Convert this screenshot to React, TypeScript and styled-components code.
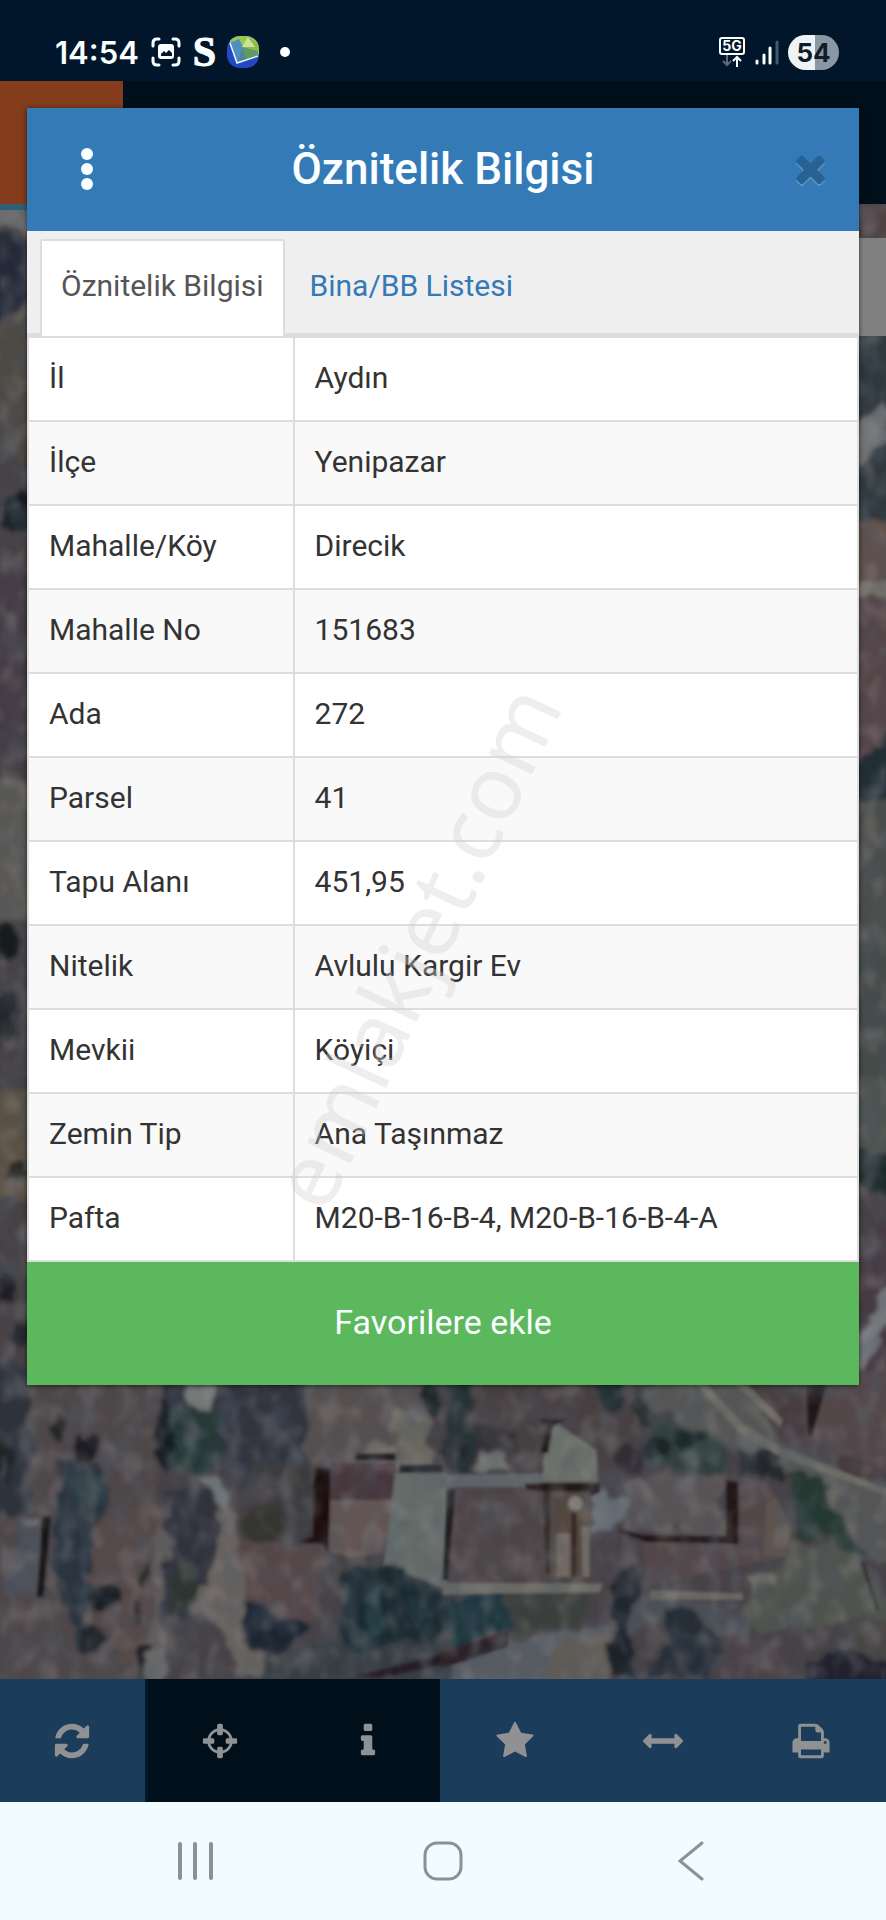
import React, { useState } from "react";
import styled, { createGlobalStyle } from "styled-components";

const GlobalStyle = createGlobalStyle`
    *{
        box-sizing : border-box;
    }
    body{
        margin : 0;
        background-color : #01162a;
        font-family : Roboto, "Liberation Sans", sans-serif;
        font-size : 30px;
        color : #333;
    }
    button{
        font : inherit;
        color : inherit;
        border : none;
        padding : 0;
        background : none;
        cursor : pointer;
    }
    svg{
        display : block;
    }
`

const PageStyled = styled.div`
    min-height : 100vh;
    display : flex;
    flex-direction : column;
    position : relative;
`

// status bar
const StatusBarStyled = styled.header`
    height : 81px;
    padding : 22px 47px 0 55px;
    display : flex;
    align-items : flex-start;
    justify-content : space-between;
    background-color : #01162a;
    color : #fbffff;
`

const StatusGroupStyled = styled.div<{gap:number}>`
    height : 60px;
    display : flex;
    align-items : center;
    gap : ${(props) => props.gap}px;
`

const ClockStyled = styled.time`
    font-family : Inter, sans-serif;
    font-weight : 600;
    font-size : 31px;
`

const SerifMarkStyled = styled.span`
    font-family : "Liberation Serif", serif;
    font-weight : 700;
    font-size : 42px;
    line-height : 60px;
    -webkit-text-stroke : 1px #fbffff;
`

const DotStyled = styled.span`
    width : 10px;
    height : 10px;
    margin-left : 10px;
    border-radius : 50%;
    background-color : #fbffff;
`

const BatteryStyled = styled.span<{level:number}>`
    width : 51px;
    height : 35px;
    border-radius : 18px;
    display : flex;
    align-items : center;
    justify-content : center;
    font-family : Inter, sans-serif;
    font-weight : 700;
    font-size : 26px;
    color : #101c28;
    background : linear-gradient(to right, #eef3f6 ${(props) => props.level}%, #8b97a2 ${(props) => props.level}%);
`

// page that lies under the dialog
const StageStyled = styled.main`
    flex : 1;
    display : flex;
    flex-direction : column;
    position : relative;
`

const AppHeaderStyled = styled.div`
    height : 123px;
    display : flex;
    background-color : #010f1a;
`

const BrandStyled = styled.div`
    width : 123px;
    background-color : #843c1c;
`

const MapStyled = styled.div`
    flex : 1;
    min-height : 1475px;
    position : relative;
    overflow : hidden;
    background-color : #454246;
`

const MapSvgStyled = styled.svg`
    position : absolute;
    inset : 0;
    width : 100%;
    height : 100%;
`

const ToolbarStyled = styled.nav`
    display : grid;
    grid-template-columns : repeat(6, 1fr);
`

const ToolStyled = styled.button<{$dark?:boolean, $edge:string}>`
    height : 123px;
    display : flex;
    align-items : center;
    justify-content : center;
    color : #8f9193;
    background-color : ${(props) => props.$dark ? '#010f1a' : '#1b3c5a'};
    border-right : 3px solid ${(props) => props.$edge};
`

// dialog
const DialogStyled = styled.section`
    position : absolute;
    top : 27px;
    left : 27px;
    right : 27px;
    background-color : #fff;
    box-shadow : 0 1px 5px rgba(0, 0, 0, 0.6);
`

const DialogHeaderStyled = styled.div`
    height : 123px;
    padding : 0 27px 2px;
    display : grid;
    grid-template-columns : 1fr auto 1fr;
    align-items : center;
    background-color : #337ab7;
    color : #fbffff;
`

const DialogTitleStyled = styled.h1`
    margin : 0;
    font-size : 44px;
    font-weight : 500;
`

const MenuButtonStyled = styled.button`
    justify-self : start;
    padding : 0 15px;
`

const CloseButtonStyled = styled.button`
    justify-self : end;
`

const TabListStyled = styled.div`
    padding : 8px 13px 0;
    display : flex;
    gap : 4px;
    background-color : #efefef;
    border-bottom : 3px solid #ddd;
`

const TabStyled = styled.button<{$active:boolean}>`
    height : 97px;
    margin-bottom : -3px;
    padding : 0 19px 6px;
    border : 2px solid ${(props) => props.$active ? '#ddd' : 'transparent'};
    border-bottom : none;
    border-radius : 3px 3px 0 0;
    background-color : ${(props) => props.$active ? '#fff' : 'transparent'};
    color : ${(props) => props.$active ? '#555' : '#337ab7'};
`

const TableStyled = styled.table`
    width : 100%;
    border-collapse : collapse;
    border : 2px solid #ddd;
    border-top : none;
`

const RowStyled = styled.tr`
    height : 84px;
    &:nth-child(even){
        background-color : #f9f9f9;
    }
`

const NameCellStyled = styled.th`
    width : 32%;
    padding : 0 20px 3px;
    border : 2px solid #ddd;
    font-weight : 400;
    text-align : left;
`

const ValueCellStyled = styled.td`
    padding : 0 20px 3px;
    border : 2px solid #ddd;
`

const FavoriteButtonStyled = styled.button`
    width : 100%;
    height : 123px;
    padding-bottom : 3px;
    display : block;
    background-color : #5cb85c;
    color : #fbffff;
    font-size : 34px;
`

const WatermarkStyled = styled.div`
    position : absolute;
    top : 946px;
    left : 414px;
    transform : translate(-50%, -50%) rotate(-65deg);
    font-family : "Noto Sans", "Open Sans", sans-serif;
    font-size : 89px;
    line-height : 1;
    white-space : nowrap;
    color : rgba(208, 208, 208, 0.36);
    pointer-events : none;
`

// system navigation
const SystemNavStyled = styled.footer`
    height : 118px;
    padding : 0 71px;
    display : flex;
    background-color : #f2fbfe;
`

const SystemButtonStyled = styled.button`
    flex : 1;
    display : flex;
    align-items : center;
    justify-content : center;
    color : #8c9193;
`

interface rowType{
    name : string,
    value : string,
}

interface toolType{
    label : string,
    path : string,
    dark? : boolean,
    edge : string,
}

const rows:rowType[] = [
    { name : 'İl', value : 'Aydın' },
    { name : 'İlçe', value : 'Yenipazar' },
    { name : 'Mahalle/Köy', value : 'Direcik' },
    { name : 'Mahalle No', value : '151683' },
    { name : 'Ada', value : '272' },
    { name : 'Parsel', value : '41' },
    { name : 'Tapu Alanı', value : '451,95' },
    { name : 'Nitelik', value : 'Avlulu Kargir Ev' },
    { name : 'Mevkii', value : 'Köyiçi' },
    { name : 'Zemin Tip', value : 'Ana Taşınmaz' },
    { name : 'Pafta', value : 'M20-B-16-B-4, M20-B-16-B-4-A' },
]

const tabs = ['Öznitelik Bilgisi', 'Bina/BB Listesi'];

const tools:toolType[] = [
    { label : 'Yenile', edge : '#02182b', path : 'M1639 1056q0 5-1 7-64 268-268 434.5t-478 166.5q-146 0-282.5-55t-243.5-157l-129 129q-19 19-45 19t-45-19-19-45v-448q0-26 19-45t45-19h448q26 0 45 19t19 45-19 45l-137 137q71 66 161 102t187 36q134 0 250-65t186-179q11-17 53-117 8-23 30-23h192q13 0 22.5 9.5t9.5 22.5zm25-800v448q0 26-19 45t-45 19h-448q-26 0-45-19t-19-45 19-45l138-138q-148-137-349-137-134 0-250 65t-186 179q-11 17-53 117-8 23-30 23h-199q-13 0-22.5-9.5t-9.5-22.5v-7q65-268 270-434.5t480-166.5q146 0 284 55.5t245 156.5l130-129q19-19 45-19t45 19 19 45z' },
    { label : 'Konum', dark : true, edge : '#010f1a', path : 'M1325 1024h-109q-26 0-45-19t-19-45v-128q0-26 19-45t45-19h109q-32-108-112.5-188.5t-188.5-112.5v109q0 26-19 45t-45 19h-128q-26 0-45-19t-19-45v-109q-108 32-188.5 112.5t-112.5 188.5h109q26 0 45 19t19 45v128q0 26-19 45t-45 19h-109q32 108 112.5 188.5t188.5 112.5v-109q0-26 19-45t45-19h128q26 0 45 19t19 45v109q108-32 188.5-112.5t112.5-188.5zm339-192v128q0 26-19 45t-45 19h-143q-37 161-154.5 278.5t-278.5 154.5v143q0 26-19 45t-45 19h-128q-26 0-45-19t-19-45v-143q-161-37-278.5-154.5t-154.5-278.5h-143q-26 0-45-19t-19-45v-128q0-26 19-45t45-19h143q37-161 154.5-278.5t278.5-154.5v-143q0-26 19-45t45-19h128q26 0 45 19t19 45v143q161 37 278.5 154.5t154.5 278.5h143q26 0 45 19t19 45z' },
    { label : 'Bilgi', dark : true, edge : '#1b3c5a', path : 'M1216 1344v128q0 26-19 45t-45 19h-512q-26 0-45-19t-19-45v-128q0-26 19-45t45-19h64v-384h-64q-26 0-45-19t-19-45v-128q0-26 19-45t45-19h384q26 0 45 19t19 45v576h64q26 0 45 19t19 45zm-128-1152v192q0 26-19 45t-45 19h-256q-26 0-45-19t-19-45v-192q0-26 19-45t45-19h256q26 0 45 19t19 45z' },
    { label : 'Favoriler', edge : '#1b3c5a', path : 'M1728 647q0 22-26 48l-363 354 86 500q1 7 1 20 0 21-10.5 35.5t-30.5 14.5q-19 0-40-12l-449-236-449 236q-22 12-40 12-21 0-31.5-14.5t-10.5-35.5q0-6 2-20l86-500-364-354q-25-27-25-48 0-37 56-46l502-73 225-455q19-41 49-41t49 41l225 455 502 73q56 9 56 46z' },
    { label : 'Ölçüm', edge : '#1b3c5a', path : 'M1792 896q0 26-19 45l-256 256q-19 19-45 19t-45-19-19-45v-128h-1024v128q0 26-19 45t-45 19-45-19l-256-256q-19-19-19-45t19-45l256-256q19-19 45-19t45 19 19 45v128h1024v-128q0-26 19-45t45-19 45 19l256 256q19 19 19 45z' },
    { label : 'Yazdır', edge : '#1b3c5a', path : 'M448 1536h896v-256h-896v256zm0-640h896v-384h-160q-40 0-68-28t-28-68v-160h-640v640zm1152 64q0-26-19-45t-45-19-45 19-19 45 19 45 45 19 45-19 19-45zm128 0v416q0 13-9.5 22.5t-22.5 9.5h-224v160q0 40-28 68t-68 28h-960q-40 0-68-28t-28-68v-160h-224q-13 0-22.5-9.5t-9.5-22.5v-416q0-79 56.5-135.5t135.5-56.5h64v-544q0-40 28-68t68-28h672q40 0 88 20t76 48l152 152q28 28 48 76t20 88v256h64q79 0 135.5 56.5t56.5 135.5z' },
]

const TIMES_PATH = 'M1490 1322q0 40-28 68l-136 136q-28 28-68 28t-68-28l-294-294-294 294q-28 28-68 28t-68-28l-136-136q-28-28-28-68t28-68l294-294-294-294q-28-28-28-68t28-68l136-136q28-28 68-28t68 28l294 294 294-294q28-28 68-28t68 28l136 136q28 28 28 68t-28 68l-294 294 294 294q28 28 28 68z';

const StatusBar = () => {
    return (
        <StatusBarStyled>
            <StatusGroupStyled gap={11}>
                <ClockStyled>14:54</ClockStyled>
                <svg width="32" height="32" viewBox="0 0 32 32" fill="none" stroke="#fbffff" strokeWidth="3" strokeLinecap="round">
                    <path d="M3 10V7q0-4 4-4h2M23 3h2q4 0 4 4v3M29 22v3q0 4-4 4h-2M9 29H7q-4 0-4-4v-3" />
                    <path fillRule="evenodd" fill="#fbffff" stroke="none" d="M11 8h10q3 0 3 3v9q0 3-3 3H11q-3 0-3-3v-9q0-3 3-3zM11 20h11v-3l-3-3-3 3-2-2-3 3z" />
                </svg>
                <SerifMarkStyled>S</SerifMarkStyled>
                <svg width="32" height="32" viewBox="0 0 32 32">
                    <defs>
                        <clipPath id="appShape"><rect width="32" height="32" rx="13" /></clipPath>
                    </defs>
                    <g clipPath="url(#appShape)">
                        <rect width="32" height="32" fill="#2348c4" />
                        <path d="M2 0H32V19L3 7z" fill="#9cc653" />
                        <path d="M3 7L15 10L31 19L10 27z" fill="#4b86a0" />
                        <path d="M3 7L12 3L16 11L10 27z" fill="#4f8fc0" />
                        <path d="M15 11L22 1L31 8V19z" fill="#8fba50" />
                        <path d="M15 11L21 1L28 11z" fill="#cbe29c" />
                        <path d="M15 11L31 15V19L19 24z" fill="#5f9a62" />
                        <path d="M3 7L10 27L31 20" fill="none" stroke="#eaf7ff" strokeWidth="1.5" />
                    </g>
                </svg>
                <DotStyled />
            </StatusGroupStyled>
            <StatusGroupStyled gap={9}>
                <svg width="28" height="32" viewBox="0 0 28 32" fill="none" stroke="#fbffff" strokeWidth="2">
                    <rect x="2" y="2" width="24" height="16" rx="2" />
                    <text x="14" y="15" textAnchor="middle" fill="#fbffff" stroke="none" fontFamily="Inter, sans-serif" fontWeight="700" fontSize="14">5G</text>
                    <path d="M9 19v10M5 25l4 4 4-4" stroke="#5b6b7b" />
                    <path d="M19 31V21M15 25l4-4 4 4" />
                </svg>
                <svg width="24" height="26" viewBox="0 0 24 26" strokeWidth="3" strokeLinecap="round" stroke="#fbffff">
                    <path d="M2 22v2M9 16v8M15 9v15" />
                    <path d="M22 3v21" stroke="#46586a" />
                </svg>
                <BatteryStyled level={53}>54</BatteryStyled>
            </StatusGroupStyled>
        </StatusBarStyled>
    )
}

// dimmed aerial view of the village
const AerialMap = () => {
    return (
        <MapSvgStyled viewBox="0 204 886 1475" preserveAspectRatio="xMidYMax slice" aria-hidden="true">
            <defs>
                <filter id="organic" x="-5%" y="-5%" width="110%" height="110%">
                    <feTurbulence type="fractalNoise" baseFrequency="0.05" numOctaves="3" seed="4" result="noise" />
                    <feDisplacementMap in="SourceGraphic" in2="noise" scale="18" xChannelSelector="R" yChannelSelector="G" />
                    <feGaussianBlur stdDeviation="2" />
                </filter>
                <filter id="organicWide" x="-5%" y="-5%" width="110%" height="110%">
                    <feTurbulence type="fractalNoise" baseFrequency="0.012" numOctaves="3" seed="7" result="noise" />
                    <feDisplacementMap in="SourceGraphic" in2="noise" scale="70" xChannelSelector="R" yChannelSelector="G" />
                    <feGaussianBlur stdDeviation="7" />
                </filter>
                <filter id="soft"><feGaussianBlur stdDeviation="4" /></filter>
                <filter id="shade" x="0" y="0" width="100%" height="100%">
                    <feTurbulence type="fractalNoise" baseFrequency="0.05 0.03" numOctaves="2" seed="11" />
                    <feColorMatrix values="0 0 0 0 0.08  0 0 0 0 0.1  0 0 0 0 0.13  3 0 0 0 -1.3" />
                    <feGaussianBlur stdDeviation="1.5" />
                </filter>
                <filter id="light" x="0" y="0" width="100%" height="100%">
                    <feTurbulence type="fractalNoise" baseFrequency="0.05 0.04" numOctaves="2" seed="23" />
                    <feColorMatrix values="0 0 0 0 0.42  0 0 0 0 0.39  0 0 0 0 0.38  0 3 0 0 -1.4" />
                    <feGaussianBlur stdDeviation="1.5" />
                </filter>
            </defs>
            <rect y="204" width="886" height="1475" fill="#464246" />

            {/* left strip */}
            <g filter="url(#organic)">
                <path d="M-10 208H40V250L20 225H-10z" fill="#6a6a6b" />
                <path d="M-10 236L20 232L34 270V330H-10z" fill="#272c38" />
                <path d="M-10 330L30 300V470L-10 440z" fill="#4d4845" />
                <ellipse cx="17" cy="512" rx="15" ry="22" fill="#171a22" />
                <path d="M-10 550H40V770H-10z" fill="#453c44" />
                <path d="M-10 780H40V920H-10z" fill="#5a5855" />
                <ellipse cx="8" cy="940" rx="12" ry="16" fill="#181b1d" />
                <ellipse cx="6" cy="1020" rx="14" ry="24" fill="#20262a" />
                <path d="M-10 1090H40V1200H-10z" fill="#5a5145" />
                <ellipse cx="16" cy="1170" rx="10" ry="9" fill="#22201f" />
                <ellipse cx="6" cy="1290" rx="9" ry="14" fill="#1b1d24" />
                <ellipse cx="20" cy="1335" rx="9" ry="12" fill="#20222a" />
            </g>

            {/* right strip */}
            <g filter="url(#organic)">
                <path d="M850 204H900V240H850z" fill="#503f43" />
                <path d="M850 330H900V540H850z" fill="#2d373c" />
                <path d="M850 430L886 400V440L850 480z" fill="#6c6f72" />
                <path d="M850 520H900V580H850z" fill="#61504b" />
                <path d="M850 582H900V596H850z" fill="#77736a" />
                <path d="M850 596H900V760H850z" fill="#544449" />
                <path d="M850 770L900 720V800H850z" fill="#242e34" />
                <path d="M850 800H900V960H850z" fill="#4b4d4c" />
                <path d="M850 960L900 920V1080H850z" fill="#454c4a" />
                <path d="M850 1080H900V1150H850z" fill="#4e5350" />
                <path d="M850 1150H900V1200L850 1180z" fill="#1d2a2c" />
                <path d="M850 1230H900V1400H850z" fill="#463b42" />
                <path d="M850 1350L890 1280V1320L860 1380z" fill="#75787c" />
            </g>

            {/* gardens on the left of the block */}
            <g transform="translate(0 1380) scale(0.3334)">
                <g filter="url(#organicWide)">
                    <path d="M80 -40H480V940H-40V420z" fill="#4d464a" />
                    <path d="M-40 -40H90V400H-40z" fill="#2f313a" />
                    <path d="M480 -40H930V270H480z" fill="#31343f" />
                    <path d="M500 80H660V280H500z" fill="#283838" />
                    <path d="M560 20H650L640 80H570z" fill="#767878" />
                    <path d="M920 -40H1260V260H920z" fill="#54504f" />
                    <path d="M1100 190H1180V220H1090z" fill="#74716b" />
                    <path d="M1180 100H1290V260H1190z" fill="#69665f" />
                    <ellipse cx="1290" cy="60" rx="35" ry="50" fill="#172424" />
                    <ellipse cx="490" cy="170" rx="26" ry="110" fill="#171b22" />
                    <ellipse cx="255" cy="215" rx="34" ry="44" fill="#1a1e22" />
                    <ellipse cx="170" cy="140" rx="20" ry="38" fill="#252527" />
                    <ellipse cx="20" cy="240" rx="28" ry="80" fill="#1b2023" />
                    <path d="M180 230L330 270L280 620L230 800L160 560z" fill="#2b3540" />
                    <path d="M240 290H300V390H210z" fill="#2a3c43" />
                    <path d="M50 430L130 420L120 640H20z" fill="#4e4f58" />
                    <path d="M55 425H125V445L60 455z" fill="#777376" />
                    <path d="M290 440L480 320V860H370L260 600z" fill="#554849" />
                    <ellipse cx="310" cy="650" rx="44" ry="38" fill="#181d22" />
                    <ellipse cx="272" cy="780" rx="38" ry="44" fill="#24252c" />
                    <ellipse cx="440" cy="590" rx="16" ry="44" fill="#20201f" />
                    <ellipse cx="410" cy="700" rx="16" ry="38" fill="#26272a" />
                    <path d="M500 320L640 330L680 480L600 700H490z" fill="#30333c" />
                    <ellipse cx="545" cy="620" rx="44" ry="70" fill="#2f3631" />
                    <path d="M470 440L520 480L490 560L500 880H430V820L480 700z" fill="#605b5b" />
                    <path d="M600 280L680 310L690 400L640 350z" fill="#6d7478" />
                    <path d="M650 380L700 390L745 680L720 780L830 890H700L660 740L580 690L590 600H640z" fill="#68635e" />
                    <path d="M700 330L830 310L860 480L960 490V260L760 240z" fill="#3b3a3e" />
                    <ellipse cx="800" cy="420" rx="70" ry="60" fill="#343632" />
                    <path d="M710 470L970 500V720H740z" fill="#544749" />
                    <path d="M740 660L940 740L800 840L730 780z" fill="#1e2830" />
                    <path d="M800 840L1380 700V940H800z" fill="#373e43" />
                    <path d="M410 800H450V900H420z" fill="#201b20" />
                    <path d="M430 810H490V890H430z" fill="#6a696b" />
                </g>
                <g filter="url(#soft)">
                    <path d="M128 410H152L130 650H112z" fill="#121318" />
                    <path d="M945 262L992 268L985 515L970 490L900 485L940 470z" fill="#1f1011" />
                    <path d="M992 250H1185V360H992z" fill="#46393d" />
                    <path d="M992 360H1180L1150 520L1050 530L988 515z" fill="#645452" />
                    <path d="M1185 280H1340V630L1150 560z" fill="#656c69" />
                    <path d="M1200 255H1329V278H1195z" fill="#22242a" />
                    <path d="M1070 222H1185V240H1065z" fill="#241f22" />
                </g>
                <g filter="url(#organicWide)">
                    <path d="M1030 580L1170 550L1350 650V750L1020 830z" fill="#1a2c33" />
                    <path d="M1100 640L1160 620L1140 760L1090 780z" fill="#273e45" />
                    <path d="M1220 640L1300 690L1250 750z" fill="#21363d" />
                </g>
                <path d="M1060 890L1335 820V850L1140 895z" fill="#281f27" filter="url(#soft)" />
            </g>

            {/* houses and the road */}
            <g transform="translate(443 1380) scale(0.3334)">
                <g filter="url(#organicWide)">
                    <path d="M20 -40H90V280H20z" fill="#253235" />
                    <path d="M90 -40H560V280H90z" fill="#463f43" />
                    <path d="M420 -40H560L540 90H460z" fill="#283235" />
                    <path d="M100 130L230 160L220 260H190V210L90 200z" fill="#353034" />
                    <path d="M100 200H190V270H100z" fill="#6d6f70" />
                    <ellipse cx="30" cy="220" rx="30" ry="50" fill="#1d2325" />
                    <path d="M740 -40H900L1380 300V560H1200L1080 300L850 200L620 80L630 -40z" fill="#545754" />
                    <path d="M870 -40H1150L1380 240V330L1020 200z" fill="#463e41" />
                    <path d="M1120 -40H1380V290L1100 180z" fill="#534748" />
                    <path d="M620 110L780 160L860 230L830 280L640 260z" fill="#33413d" />
                    <ellipse cx="640" cy="195" rx="34" ry="34" fill="#1c2827" />
                    <ellipse cx="730" cy="185" rx="38" ry="34" fill="#1f2c2b" />
                    <ellipse cx="600" cy="95" rx="40" ry="34" fill="#272d2b" />
                    <ellipse cx="560" cy="240" rx="50" ry="60" fill="#322f34" />
                    <path d="M540 300L840 280V460L540 450z" fill="#595354" />
                    <path d="M900 200L1020 210V300L880 290z" fill="#23252a" />
                    <path d="M1040 500L1180 490L1290 600L1380 700L950 760L900 680z" fill="#50524d" />
                    <path d="M1030 280L1140 290L1200 420L1280 560L1240 540L1150 470L1070 490z" fill="#263833" />
                    <path d="M560 640L910 690L930 760L820 770L740 690L560 760z" fill="#4b5054" />
                    <path d="M20 650L200 640V740L20 820z" fill="#1f363d" />
                    <path d="M200 770L500 740L480 940H20V860z" fill="#595b62" />
                    <path d="M320 800L500 760V940H320z" fill="#605b56" />
                    <path d="M180 650L300 620L440 640L430 720L320 750L210 760z" fill="#3b3f3c" />
                    <path d="M520 560L580 560L590 640L560 700L570 880H500L480 790L530 740L500 640z" fill="#1f2429" />
                    <path d="M660 690L740 690L830 780L810 890H600L680 800z" fill="#262e37" />
                    <path d="M840 770L1000 780L1050 940H830z" fill="#484346" />
                    <path d="M1110 830L1240 810L1380 860V940H1080z" fill="#21232d" />
                    <path d="M1240 700L1380 710V850L1200 800z" fill="#4a4544" />
                    <path d="M450 330L550 360L500 470L440 480z" fill="#697176" />
                    <path d="M900 590H1010V620L930 640z" fill="#757169" />
                </g>
                <g filter="url(#soft)">
                    <path d="M-5 285L300 280V322H-5z" fill="#606367" />
                    <path d="M740 -10H770L900 130L1010 200L1340 330V350L1000 225L880 150z" fill="#6c6a64" />
                    <path d="M850 -10H890L1020 120L1010 140z" fill="#6b6762" />
                    <path d="M1090 10H1150L1105 170L1095 160z" fill="#1d1517" />
                    <path d="M30 330H300V600H15z" fill="#4d4446" />
                    <path d="M15 330L38 325L15 600H0z" fill="#1b1b20" />
                    <path d="M335 125L460 210L465 305H300V240z" fill="#6c706a" />
                    <path d="M290 118H370L330 140L315 220L295 215L308 140z" fill="#1f1414" />
                    <path d="M245 310H470V335L440 350V400L420 340L290 335L250 328z" fill="#231917" />
                    <path d="M300 335H440V600H300z" fill="#52463f" />
                    <path d="M300 335H322V580H308zM385 400H400V590H388z" fill="#332722" />
                    <path d="M340 460H380V590H340zM415 440H440V590H418z" fill="#736b64" />
                    <circle cx="398" cy="370" r="22" fill="#7d7978" />
                    <path d="M600 488L886 495V290L970 310L1040 420L1030 530L880 560L610 620z" fill="#524648" />
                    <path d="M520 450L600 465L850 470V300L886 310V492L610 485z" fill="#221415" />
                    <path d="M970 370L1000 350L1040 450L1030 530H960z" fill="#5e524e" />
                    <path d="M0 608L480 610L470 638L0 643z" fill="#6a6b65" />
                    <path d="M620 630L900 640V660H620z" fill="#686662" />
                    <path d="M-10 818L195 750V800L-10 865z" fill="#2a2228" />
                    <path d="M1262 540L1308 690H1300L1255 550z" fill="#2b2c2c" />
                </g>
            </g>

            <rect y="204" width="886" height="1475" filter="url(#shade)" opacity="0.4" />
            <rect y="204" width="886" height="1475" filter="url(#light)" opacity="0.22" />
            <rect y="204" width="123" height="6" fill="#2f5f72" />
            <rect x="840" y="238" width="46" height="98" fill="#808080" />
        </MapSvgStyled>
    )
}

const Toolbar = () => {
    return (
        <ToolbarStyled>
            {tools.map((tool) => (
                <ToolStyled key={tool.label} aria-label={tool.label} $dark={tool.dark} $edge={tool.edge}>
                    <svg width="40" height="40" viewBox="0 0 1792 1792" fill="currentColor"><path d={tool.path} /></svg>
                </ToolStyled>
            ))}
        </ToolbarStyled>
    )
}

const AttributeDialog = () => {
    const [currentTab, setCurrentTab] = useState<number>(0);

    return (
        <DialogStyled role="dialog" aria-labelledby="dialogTitle">
            <DialogHeaderStyled>
                <MenuButtonStyled aria-label="Menü">
                    <svg width="36" height="46" viewBox="0 0 36 46" fill="currentColor">
                        <circle cx="18" cy="8" r="6" />
                        <circle cx="18" cy="23" r="6" />
                        <circle cx="18" cy="38" r="6" />
                    </svg>
                </MenuButtonStyled>
                <DialogTitleStyled id="dialogTitle">Öznitelik Bilgisi</DialogTitleStyled>
                <CloseButtonStyled aria-label="Kapat">
                    <svg width="43" height="43" viewBox="0 0 1792 1792">
                        <path d={TIMES_PATH} fill="#5d9bd0" transform="translate(0 70)" />
                        <path d={TIMES_PATH} fill="#296292" />
                    </svg>
                </CloseButtonStyled>
            </DialogHeaderStyled>
            <TabListStyled role="tablist">
                {tabs.map((tab, index) => (
                    <TabStyled key={tab} role="tab" aria-selected={currentTab === index} $active={currentTab === index} onClick={() => setCurrentTab(index)}>
                        {tab}
                    </TabStyled>
                ))}
            </TabListStyled>
            <TableStyled>
                <tbody>
                    {rows.map((row) => (
                        <RowStyled key={row.name}>
                            <NameCellStyled scope="row">{row.name}</NameCellStyled>
                            <ValueCellStyled>{row.value}</ValueCellStyled>
                        </RowStyled>
                    ))}
                </tbody>
            </TableStyled>
            <FavoriteButtonStyled>Favorilere ekle</FavoriteButtonStyled>
        </DialogStyled>
    )
}

const SystemNav = () => {
    return (
        <SystemNavStyled>
            <SystemButtonStyled aria-label="Son uygulamalar">
                <svg width="38" height="40" viewBox="0 0 38 40" stroke="currentColor" strokeWidth="4" strokeLinecap="round">
                    <path d="M4 3v34M19 3v34M35 3v34" />
                </svg>
            </SystemButtonStyled>
            <SystemButtonStyled aria-label="Ana ekran">
                <svg width="42" height="42" viewBox="0 0 42 42" fill="none" stroke="currentColor" strokeWidth="3">
                    <rect x="3" y="3" width="36" height="36" rx="12" />
                </svg>
            </SystemButtonStyled>
            <SystemButtonStyled aria-label="Geri">
                <svg width="26" height="40" viewBox="0 0 26 40" fill="none" stroke="currentColor" strokeWidth="3" strokeLinecap="round">
                    <path d="M24 2L2 20L24 38" />
                </svg>
            </SystemButtonStyled>
        </SystemNavStyled>
    )
}

const App = () => {
    return (
        <PageStyled>
            <GlobalStyle />
            <StatusBar />
            <StageStyled>
                <AppHeaderStyled>
                    <BrandStyled />
                </AppHeaderStyled>
                <MapStyled>
                    <AerialMap />
                </MapStyled>
                <Toolbar />
                <AttributeDialog />
            </StageStyled>
            <SystemNav />
            <WatermarkStyled>emlakjet.com</WatermarkStyled>
        </PageStyled>
    )
}

export default App
